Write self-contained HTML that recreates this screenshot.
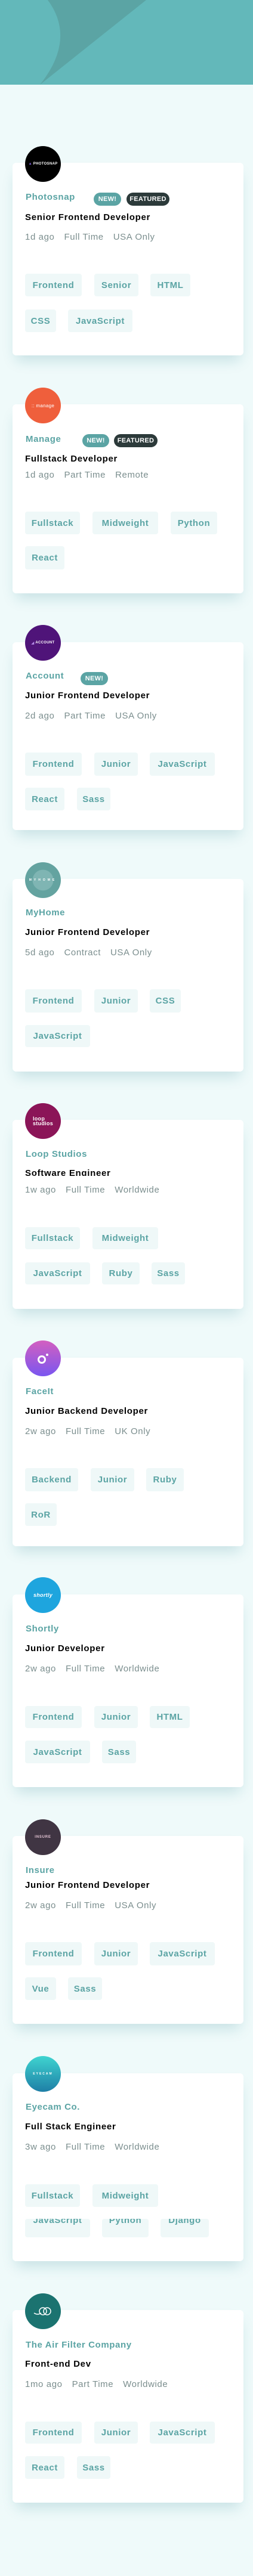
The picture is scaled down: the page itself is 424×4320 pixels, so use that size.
<!DOCTYPE html>
<html><head><meta charset="utf-8">
<style>
*{margin:0;padding:0;box-sizing:border-box}
body{width:424px;height:4320px;background:#effafa;position:relative;overflow:hidden;font-family:"Liberation Sans",sans-serif}
.hd{position:absolute;left:0;top:0;width:424px;height:142px;background:#63b8ba}
.c{position:absolute;left:21px;width:387px;background:#fff;border-radius:6px;box-shadow:0 14px 22px -6px rgba(13,113,130,0.18)}
.l{position:absolute;left:42px;width:60px;height:60px;border-radius:50%;display:flex;align-items:center;justify-content:center;color:#fff;font-weight:bold;font-size:7px;letter-spacing:.3px}
.n{position:absolute;left:43px;line-height:20px;font-size:15px;font-weight:bold;color:#5ba4a4;letter-spacing:.6px;white-space:nowrap}
.b{position:absolute;height:22px;border-radius:11px;color:#fff;font-size:11px;font-weight:bold;line-height:22px;text-align:center;letter-spacing:.3px}
.t{position:absolute;left:42px;line-height:20px;font-size:15px;font-weight:bold;color:#000;letter-spacing:.7px;white-space:nowrap}
.m{position:absolute;left:42px;line-height:20px;font-size:15px;color:#7b8e8e;letter-spacing:.6px;white-space:nowrap}
.m span{margin-right:16px}
.g{position:absolute;background:#eff8f8;border-radius:4px;color:#5ba4a4;font-weight:bold;font-size:15px;letter-spacing:.6px;display:flex;align-items:center;justify-content:center;overflow:hidden}
</style></head><body>
<div class="hd"><svg width="424" height="142" style="position:absolute;left:0;top:0"><path d="M80 0 Q128 65 67 142 L245 0 Z" fill="#5ba4a4"/></svg></div>

<!-- 1 Photosnap -->
<div class="c" style="top:273px;height:323px"></div>
<div class="l" style="top:245px;background:#000;font-size:6px"><span style="color:#7a5cd6">▲</span>&nbsp;PHOTOSNAP</div>
<div class="n" style="top:321px">Photosnap</div>
<div class="b" style="left:157px;top:323px;width:46px;background:#5ba4a4">NEW!</div>
<div class="b" style="left:212px;top:323px;width:72px;background:#2c3a3a">FEATURED</div>
<div class="t" style="top:355px">Senior Frontend Developer</div>
<div class="m" style="top:388px"><span>1d ago</span><span>Full Time</span><span>USA Only</span></div>
<div class="g" style="left:42px;top:459px;width:95px;height:38px">Frontend</div>
<div class="g" style="left:158px;top:459px;width:74px;height:38px">Senior</div>
<div class="g" style="left:252px;top:459px;width:67px;height:38px">HTML</div>
<div class="g" style="left:42px;top:519px;width:52px;height:38px">CSS</div>
<div class="g" style="left:114px;top:519px;width:108px;height:38px">JavaScript</div>

<!-- 2 Manage -->
<div class="c" style="top:678px;height:317px"></div>
<div class="l" style="top:650px;background:#ef5f3c;font-size:8px;font-weight:normal">:: manage</div>
<div class="n" style="top:727px">Manage</div>
<div class="b" style="left:138px;top:728px;width:45px;background:#5ba4a4">NEW!</div>
<div class="b" style="left:191px;top:728px;width:73px;background:#2c3a3a">FEATURED</div>
<div class="t" style="top:760px">Fullstack Developer</div>
<div class="m" style="top:787px"><span>1d ago</span><span>Part Time</span><span>Remote</span></div>
<div class="g" style="left:42px;top:858px;width:92px;height:38px">Fullstack</div>
<div class="g" style="left:155px;top:858px;width:110px;height:38px">Midweight</div>
<div class="g" style="left:286px;top:858px;width:78px;height:38px">Python</div>
<div class="g" style="left:42px;top:916px;width:66px;height:39px">React</div>

<!-- 3 Account -->
<div class="c" style="top:1077px;height:315px"></div>
<div class="l" style="top:1048px;background:#4f1479;font-size:6px"><span style="color:#b48ae6">◢</span>&nbsp;ACCOUNT</div>
<div class="n" style="top:1124px">Account</div>
<div class="b" style="left:135px;top:1127px;width:46px;background:#5ba4a4">NEW!</div>
<div class="t" style="top:1157px">Junior Frontend Developer</div>
<div class="m" style="top:1191px"><span>2d ago</span><span>Part Time</span><span>USA Only</span></div>
<div class="g" style="left:42px;top:1262px;width:95px;height:39px">Frontend</div>
<div class="g" style="left:158px;top:1262px;width:73px;height:39px">Junior</div>
<div class="g" style="left:251px;top:1262px;width:109px;height:39px">JavaScript</div>
<div class="g" style="left:42px;top:1321px;width:66px;height:38px">React</div>
<div class="g" style="left:129px;top:1321px;width:56px;height:38px">Sass</div>

<!-- 4 MyHome -->
<div class="c" style="top:1474px;height:323px"></div>
<div class="l" style="top:1446px;background:radial-gradient(circle,#7fb5b3 0,#7fb5b3 40%,#64a3a0 42%);font-size:5px;letter-spacing:4px">MYHOME</div>
<div class="n" style="top:1521px">MyHome</div>
<div class="t" style="top:1554px">Junior Frontend Developer</div>
<div class="m" style="top:1588px"><span>5d ago</span><span>Contract</span><span>USA Only</span></div>
<div class="g" style="left:42px;top:1659px;width:95px;height:39px">Frontend</div>
<div class="g" style="left:158px;top:1659px;width:73px;height:39px">Junior</div>
<div class="g" style="left:251px;top:1659px;width:52px;height:39px">CSS</div>
<div class="g" style="left:42px;top:1719px;width:109px;height:37px">JavaScript</div>

<!-- 5 Loop -->
<div class="c" style="top:1878px;height:317px"></div>
<div class="l" style="top:1850px;background:#8b1558;font-size:9px;line-height:8px;flex-direction:column">loop<br>studios</div>
<div class="n" style="top:1926px">Loop Studios</div>
<div class="t" style="top:1958px;height:14px;overflow:hidden">Software Engineer</div>
<div class="m" style="top:1986px"><span>1w ago</span><span>Full Time</span><span>Worldwide</span></div>
<div class="g" style="left:42px;top:2058px;width:92px;height:37px">Fullstack</div>
<div class="g" style="left:155px;top:2058px;width:110px;height:37px">Midweight</div>
<div class="g" style="left:42px;top:2117px;width:109px;height:37px">JavaScript</div>
<div class="g" style="left:171px;top:2117px;width:63px;height:37px">Ruby</div>
<div class="g" style="left:254px;top:2117px;width:56px;height:37px">Sass</div>

<!-- 6 FaceIt -->
<div class="c" style="top:2277px;height:316px"></div>
<div class="l" style="top:2248px;background:linear-gradient(#d35fc0,#7a56f0)"><svg width="24" height="20"><circle cx="10" cy="12" r="5.5" fill="none" stroke="#fff" stroke-width="3"/><circle cx="19" cy="4" r="2" fill="#fff"/></svg></div>
<div class="n" style="top:2324px">FaceIt</div>
<div class="t" style="top:2357px">Junior Backend Developer</div>
<div class="m" style="top:2391px"><span>2w ago</span><span>Full Time</span><span>UK Only</span></div>
<div class="g" style="left:42px;top:2462px;width:89px;height:39px">Backend</div>
<div class="g" style="left:152px;top:2462px;width:73px;height:39px">Junior</div>
<div class="g" style="left:245px;top:2462px;width:63px;height:39px">Ruby</div>
<div class="g" style="left:42px;top:2521px;width:53px;height:38px">RoR</div>

<!-- 7 Shortly -->
<div class="c" style="top:2674px;height:323px"></div>
<div class="l" style="top:2645px;background:#1ea5de;font-size:9px;font-style:italic">shortly</div>
<div class="n" style="top:2722px">Shortly</div>
<div class="t" style="top:2755px">Junior Developer</div>
<div class="m" style="top:2789px"><span>2w ago</span><span>Full Time</span><span>Worldwide</span></div>
<div class="g" style="left:42px;top:2861px;width:95px;height:37px">Frontend</div>
<div class="g" style="left:158px;top:2861px;width:73px;height:37px">Junior</div>
<div class="g" style="left:251px;top:2861px;width:67px;height:37px">HTML</div>
<div class="g" style="left:42px;top:2919px;width:109px;height:38px">JavaScript</div>
<div class="g" style="left:171px;top:2919px;width:57px;height:38px">Sass</div>

<!-- 8 Insure -->
<div class="c" style="top:3079px;height:315px"></div>
<div class="l" style="top:3051px;background:#403543;color:#e8c8d8;font-size:6px;letter-spacing:.8px">INSURE</div>
<div class="n" style="top:3127px">Insure</div>
<div class="t" style="top:3152px">Junior Frontend Developer</div>
<div class="m" style="top:3186px"><span>2w ago</span><span>Full Time</span><span>USA Only</span></div>
<div class="g" style="left:42px;top:3257px;width:95px;height:39px">Frontend</div>
<div class="g" style="left:158px;top:3257px;width:73px;height:39px">Junior</div>
<div class="g" style="left:251px;top:3257px;width:109px;height:39px">JavaScript</div>
<div class="g" style="left:42px;top:3316px;width:52px;height:38px">Vue</div>
<div class="g" style="left:114px;top:3316px;width:57px;height:38px">Sass</div>

<!-- 9 Eyecam -->
<div class="c" style="top:3477px;height:315px"></div>
<div class="l" style="top:3448px;background:linear-gradient(#3fd4d0,#1e7fa6);font-size:5px;letter-spacing:2px">EYECAM</div>
<div class="n" style="top:3524px">Eyecam Co.</div>
<div class="t" style="top:3557px">Full Stack Engineer</div>
<div class="m" style="top:3591px"><span>3w ago</span><span>Full Time</span><span>Worldwide</span></div>
<div class="g" style="left:42px;top:3663px;width:92px;height:38px">Fullstack</div>
<div class="g" style="left:155px;top:3663px;width:110px;height:38px">Midweight</div>
<div class="g" style="left:42px;top:3721px;width:109px;height:31px;align-items:flex-start;padding-top:0;line-height:10px"><span style="margin-top:-2px">JavaScript</span></div>
<div class="g" style="left:171px;top:3721px;width:78px;height:31px;align-items:flex-start;line-height:10px"><span style="margin-top:-2px">Python</span></div>
<div class="g" style="left:269px;top:3721px;width:81px;height:31px;align-items:flex-start;line-height:10px"><span style="margin-top:-2px">Django</span></div>

<!-- 10 Air Filter -->
<div class="c" style="top:3874px;height:323px"></div>
<div class="l" style="top:3846px;background:#1b7370"><svg width="34" height="16"><path d="M2 11 Q8 15 14 11" fill="none" stroke="#fff" stroke-width="1.5"/><circle cx="17" cy="8" r="6" fill="none" stroke="#fff" stroke-width="1.5"/><circle cx="24" cy="8" r="6" fill="none" stroke="#fff" stroke-width="1.5"/></svg></div>
<div class="n" style="top:3923px">The Air Filter Company</div>
<div class="t" style="top:3955px">Front-end Dev</div>
<div class="m" style="top:3989px"><span>1mo ago</span><span>Part Time</span><span>Worldwide</span></div>
<div class="g" style="left:42px;top:4061px;width:95px;height:37px">Frontend</div>
<div class="g" style="left:158px;top:4061px;width:73px;height:37px">Junior</div>
<div class="g" style="left:251px;top:4061px;width:109px;height:37px">JavaScript</div>
<div class="g" style="left:42px;top:4119px;width:66px;height:38px">React</div>
<div class="g" style="left:129px;top:4119px;width:56px;height:38px">Sass</div>
</body></html>
